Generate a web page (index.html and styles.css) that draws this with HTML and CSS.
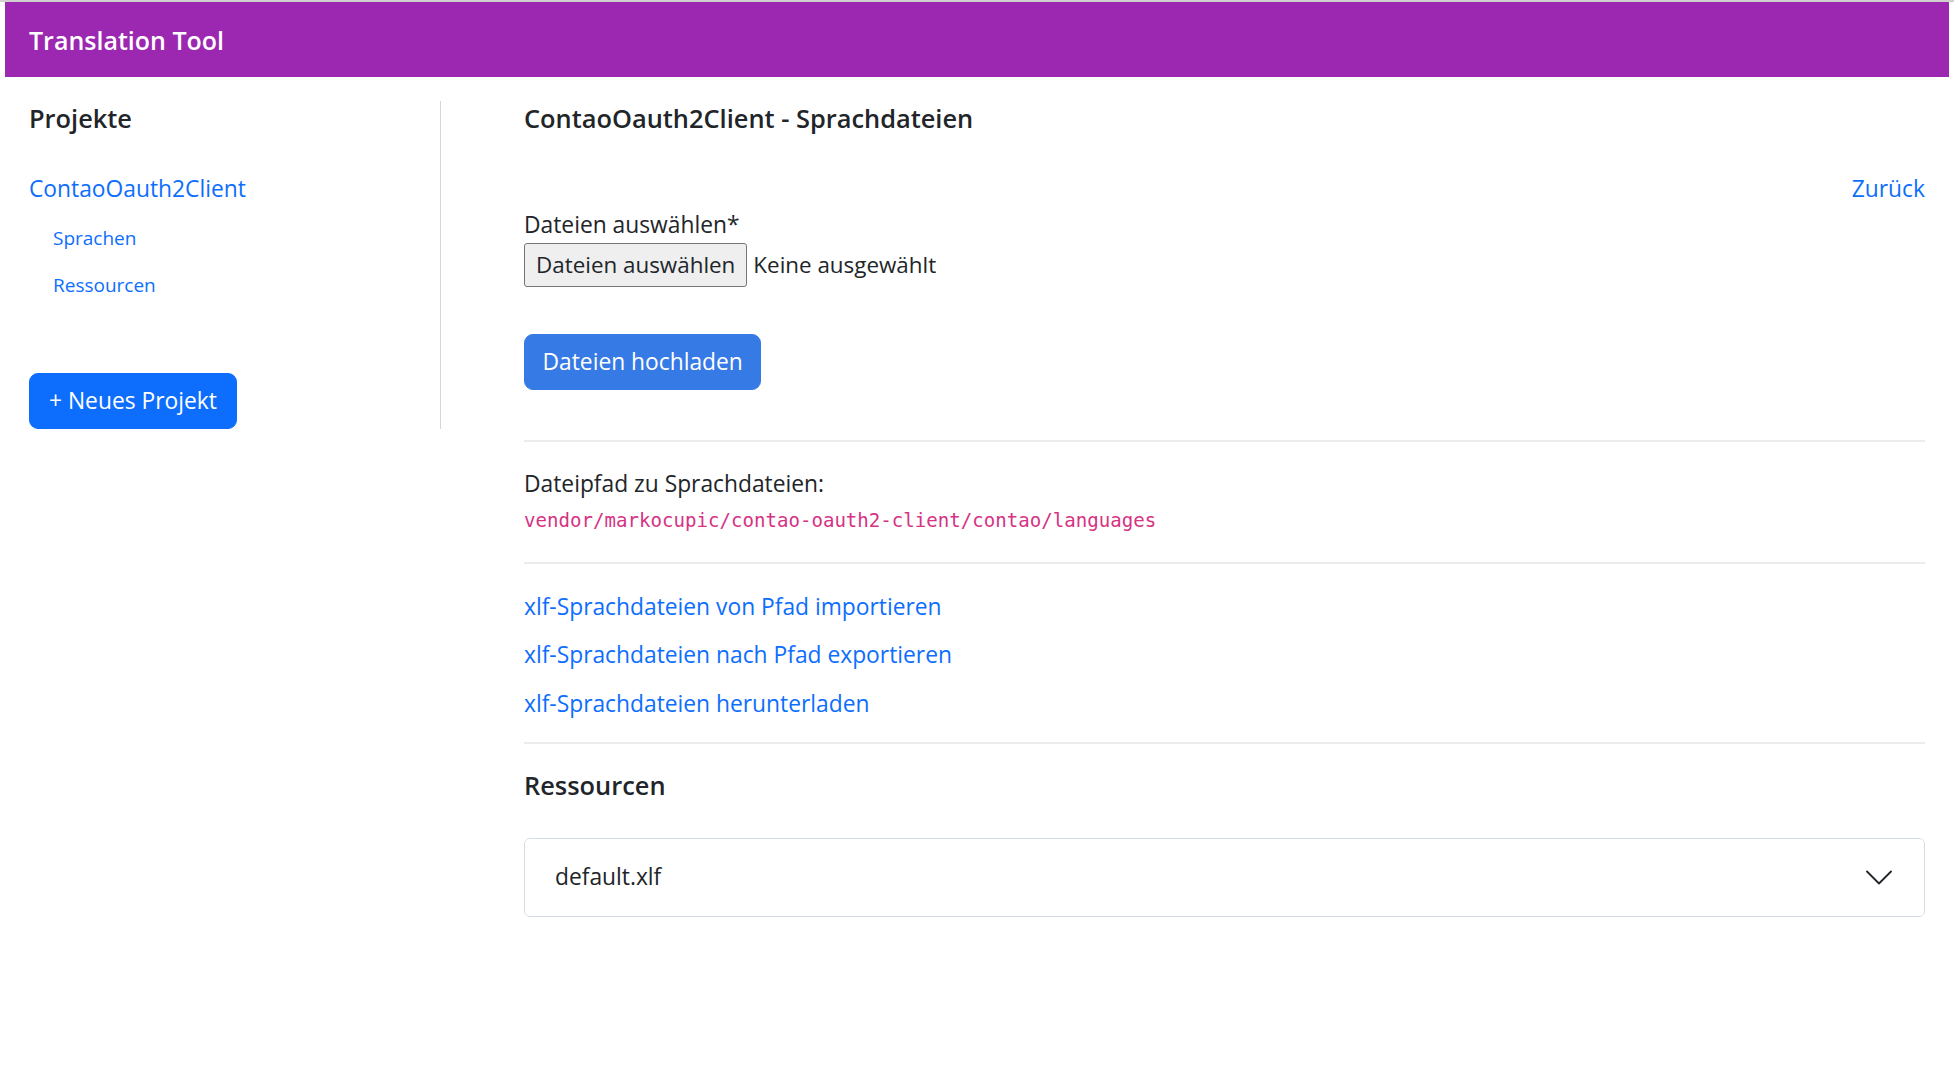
FILE: index.html
```html
<!DOCTYPE html>
<html lang="de">
<head>
<meta charset="utf-8">
<title>Translation Tool</title>
<link rel="stylesheet" href="styles.css">
</head>
<body>
<div class="topline"></div>
<div class="frame">
  <nav class="navbar"><span class="brand">Translation Tool</span></nav>
  <div class="layout">
    <aside class="sidebar">
      <h5 class="heading">Projekte</h5>
      <a class="project-link" href="#">ContaoOauth2Client</a>
      <ul class="sub-nav">
        <li><a href="#">Sprachen</a></li>
        <li><a href="#">Ressourcen</a></li>
      </ul>
      <a class="btn btn-new" href="#">+ Neues Projekt</a>
    </aside>
    <main class="main">
      <h5 class="heading">ContaoOauth2Client - Sprachdateien</h5>
      <div class="back-row"><a href="#">Zurück</a></div>
      <form class="upload">
        <label class="form-label">Dateien auswählen*</label>
        <div class="file-input"><span class="file-btn">Dateien auswählen</span><span class="file-name">Keine ausgewählt</span></div>
        <button class="btn btn-upload" type="button">Dateien hochladen</button>
      </form>
      <hr class="sep sep-first">
      <p class="path-label">Dateipfad zu Sprachdateien:</p>
      <div class="path-line"><code class="path">vendor/markocupic/contao-oauth2-client/contao/languages</code></div>
      <hr class="sep sep-second">
      <ul class="actions">
        <li><a href="#">xlf-Sprachdateien von Pfad importieren</a></li>
        <li><a href="#">xlf-Sprachdateien nach Pfad exportieren</a></li>
        <li><a href="#">xlf-Sprachdateien herunterladen</a></li>
      </ul>
      <hr class="sep sep-third">
      <h5 class="heading section-title">Ressourcen</h5>
      <div class="accordion">
        <button class="acc-btn" type="button">
          <span>default.xlf</span>
          <svg class="chevron" width="26" height="15" viewBox="0 0 26 15" aria-hidden="true"><polyline points="1,1.5 13,13.5 25,1.5" fill="none" stroke="#212529" stroke-width="1.8" stroke-linecap="round" stroke-linejoin="round"/></svg>
        </button>
      </div>
    </main>
  </div>
</div>
</body>
</html>
```

FILE: styles.css
```css
* { box-sizing: border-box; }

body {
  margin: 0;
  background: #ffffff;
  color: #212529;
  font-family: "Open Sans", "Noto Sans", sans-serif;
  font-size: 22.8px;
  line-height: 36px;
}

a { color: #0d6efd; text-decoration: none; }

.topline { height: 2px; background: #d0d0d0; }

.frame { padding: 0 5px; }

.navbar {
  height: 75px;
  background: #9c27b0;
  display: flex;
  align-items: center;
  padding-left: 24px;
}

.brand {
  color: #ffffff;
  font-weight: 600;
  font-size: 25px;
  line-height: 34px;
}

.layout {
  display: flex;
  align-items: flex-start;
  padding: 24px 24px 0;
}

.sidebar {
  width: 412px;
  flex-shrink: 0;
  border-right: 1px solid #d3d6da;
  display: flex;
  flex-direction: column;
  align-items: flex-start;
}

.main {
  flex: 1;
  margin-left: 83px;
  min-width: 0;
}

.heading {
  margin: 0;
  font-weight: 600;
  font-size: 25.4px;
  line-height: 34px;
}

.project-link {
  display: block;
  margin-top: 36px;
}

.sub-nav {
  list-style: none;
  margin: 0;
  padding: 0 0 0 24px;
  font-size: 19px;
  line-height: 30px;
}

.sub-nav li { margin-top: 15.5px; }
.sub-nav li + li { margin-top: 17.5px; }

.btn {
  display: inline-block;
  border: 1px solid transparent;
  border-radius: 9px;
  padding: 9px 19px;
  font-family: inherit;
  font-size: 22.8px;
  line-height: 36px;
  color: #ffffff;
  cursor: pointer;
}

.btn-new {
  margin-top: 73px;
  background: #0d6efd;
  border-color: #0d6efd;
}

.back-row {
  margin-top: 36px;
  text-align: right;
}

.form-label { display: block; }

.file-input {
  display: flex;
  align-items: center;
  height: 44px;
  gap: 6px;
}

.file-btn {
  height: 44px;
  line-height: 42px;
  padding: 0 11px;
  font-size: 22.4px;
  background: #efefef;
  border: 1px solid #767676;
  border-radius: 3px;
}

.file-name { font-size: 22.4px; }

.btn-upload {
  margin-top: 47px;
  padding: 9px 17.5px;
  background: #367ae6;
  border-color: #367ae6;
}

.sep {
  border: 0;
  border-top: 2px solid #ececec;
  margin: 0;
}

.sep-first { margin-top: 50px; }

.path-label { margin: 24px 0 0; }

.path {
  font-family: "DejaVu Sans Mono", "Liberation Mono", monospace;
  font-size: 19.1px;
  color: #d63384;
}

.path-line { margin-top: -1px; }

.sep-second { margin-top: 22.5px; }

.actions {
  list-style: none;
  margin: 25px 0 0;
  padding: 0;
}

.actions li + li { margin-top: 12.5px; }

.sep-third { margin-top: 20px; }

.section-title { margin-top: 24px; }

.accordion {
  margin-top: 36px;
  border: 1px solid #d5dbe2;
  border-radius: 6px;
  overflow: hidden;
}

.acc-btn {
  width: 100%;
  height: 77px;
  display: flex;
  align-items: center;
  justify-content: space-between;
  padding: 0 32px 0 30px;
  border: 0;
  background: #ffffff;
  font-family: inherit;
  font-size: 22.8px;
  line-height: 36px;
  color: #212529;
  text-align: left;
}

.chevron { display: block; }
```
